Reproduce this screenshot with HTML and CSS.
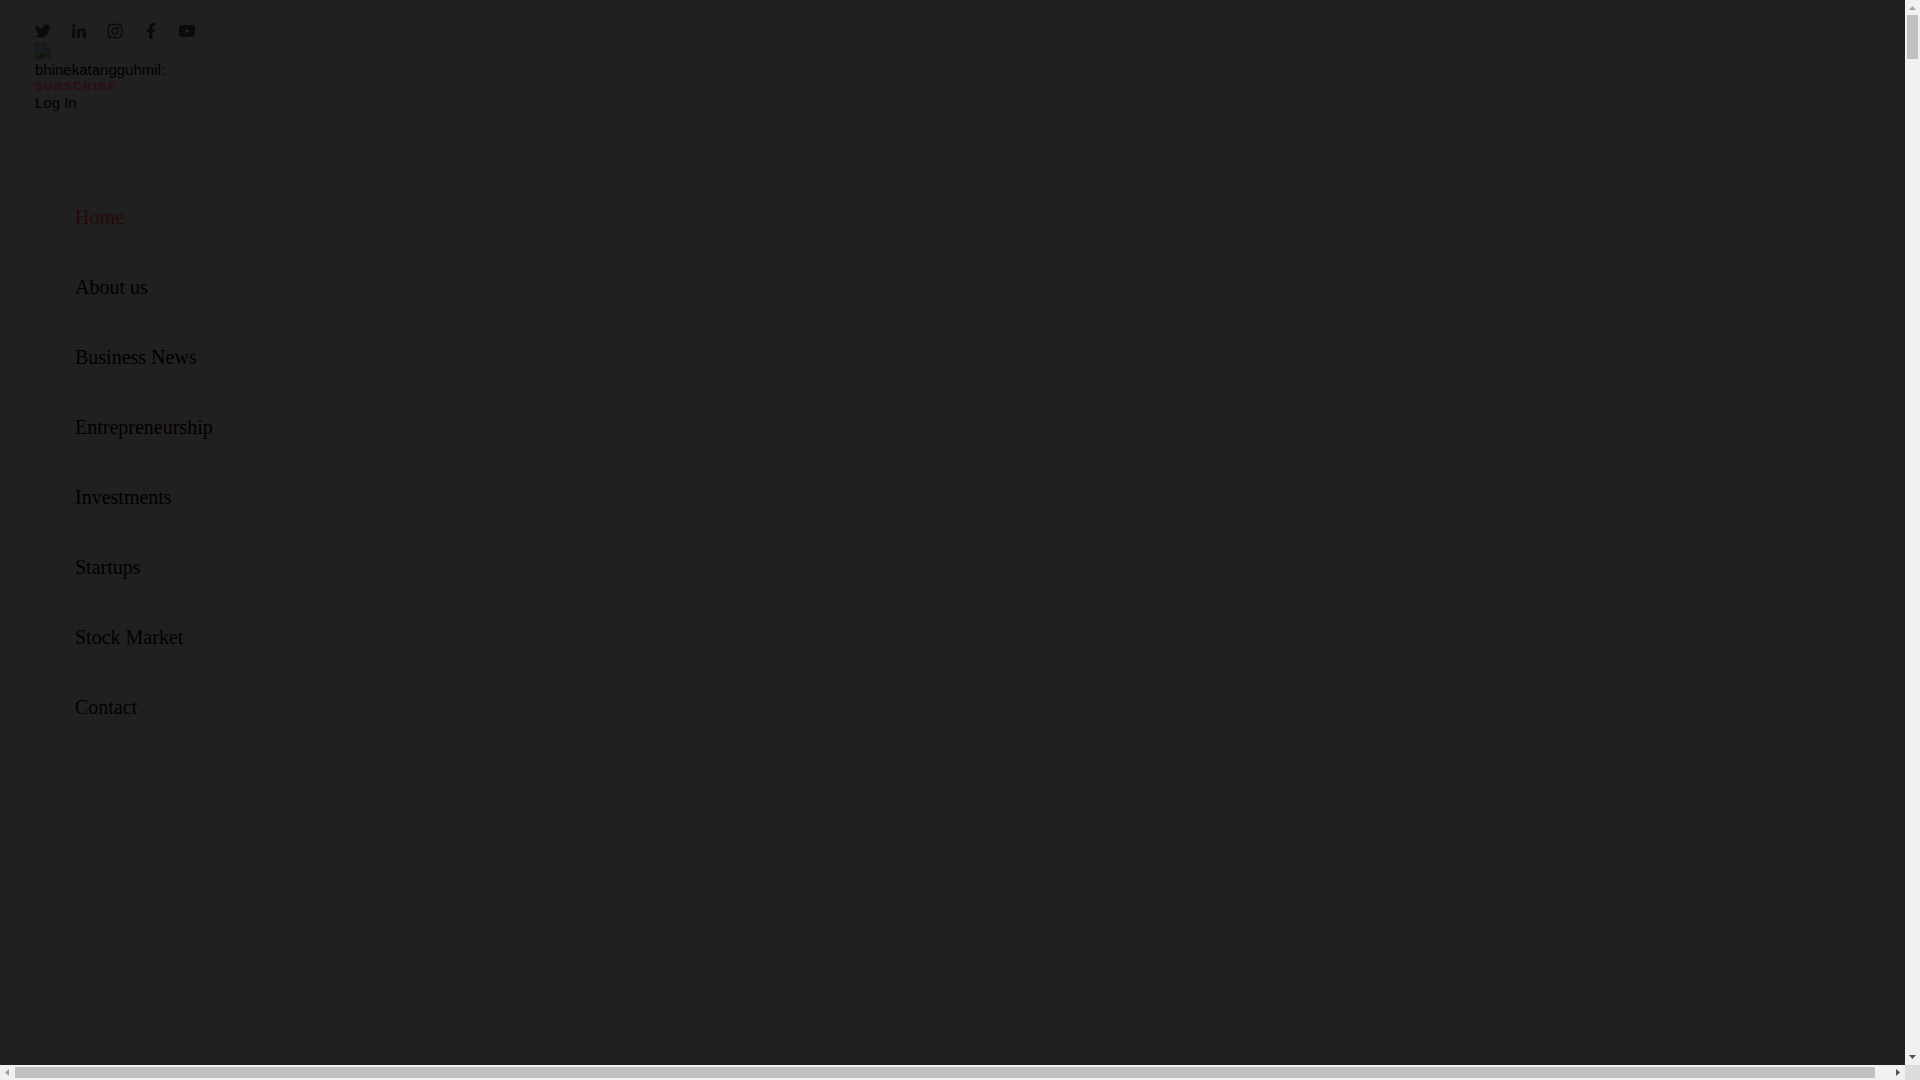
FILE: index.html
```html
<!DOCTYPE html>
<html lang="en">
<head>
    <meta charset="UTF-8">
    <meta name="viewport" content="width=device-width, initial-scale=1.0">
    <title>Home</title>
    <link rel="stylesheet" href="styles.css">
</head>
<body>
    <div class="window">
        <div class="page">
            <header class="header">
                <div class="social">
                    <a href="#" aria-label="Twitter"><svg viewBox="0 0 24 24"><path d="M23.95 4.57a10 10 0 0 1-2.82.77 4.96 4.96 0 0 0 2.16-2.72c-.95.55-2 .95-3.12 1.18a4.92 4.92 0 0 0-8.38 4.48A13.9 13.9 0 0 1 1.64 3.16a4.92 4.92 0 0 0 1.52 6.57 4.9 4.9 0 0 1-2.23-.61v.06a4.92 4.92 0 0 0 3.95 4.83 5 5 0 0 1-2.21.08 4.94 4.94 0 0 0 4.6 3.42A9.87 9.87 0 0 1 0 19.54a14 14 0 0 0 7.55 2.21c9.05 0 14-7.5 14-13.98 0-.21 0-.42-.02-.63a9.94 9.94 0 0 0 2.42-2.57z"/></svg></a>
                    <a href="#" aria-label="LinkedIn"><svg viewBox="0 0 24 24"><path d="M1.9 8.4h4.4v14.100H1.900zM4.100 1.500a2.500 2.500 0 1 1 0 5.100 2.500 2.500 0 0 1 0-5.100zM9 8.400h4.200v1.900c.6-1.100 2-2.300 4.200-2.300 4.400 0 5.200 2.900 5.200 6.700v7.800h-4.400v-6.900c0-1.600 0-3.700-2.300-3.700s-2.600 1.800-2.600 3.600v7H9z"/></svg></a>
                    <a href="#" aria-label="Instagram"><svg viewBox="0 0 24 24"><g fill="none" stroke="currentColor" stroke-width="2"><rect x="2" y="2" width="20" height="20" rx="5"/><circle cx="12" cy="12" r="4.500"/></g><circle cx="17.500" cy="6.500" r="1.300"/></svg></a>
                    <a href="#" aria-label="Facebook"><svg viewBox="0 0 24 24"><path d="M17.800 13.500l.7-4.300h-4.200V6.400c0-1.200.6-2.300 2.400-2.300h1.900V.4S16.900 0 15.200 0c-3.400 0-5.700 2.100-5.700 5.900v3.300H5.700v4.300h3.800V24h4.800V13.500z"/></svg></a>
                    <a href="#" aria-label="YouTube"><svg viewBox="0 0 24 24"><path fill-rule="evenodd" d="M4 3.500h16a4 4 0 0 1 4 4v9a4 4 0 0 1-4 4H4a4 4 0 0 1-4-4v-9a4 4 0 0 1 4-4zM9.600 8v8l6.800-4z"/></svg></a>
                </div>
                <a href="#" class="logo">
                    <svg class="broken" viewBox="0 0 16 16">
                        <path class="sheet" d="M.5.5h10l5 5v4L8 15.500H.5z"/>
                        <path class="hill" d="M2 14c2-4 6-6 10-3l-4 4H2z"/>
                        <path class="fold" d="M10.500.5v5h5M12 15.500h3.500V12z"/>
                    </svg>
                    <span>bhinekatangguhmil:</span>
                </a>
                <a href="#" class="subscribe">SUBSCRIBE</a>
                <a href="#" class="login">Log In</a>
            </header>
            <nav class="menu">
                <ul>
                    <li><a href="#" class="active">Home</a></li>
                    <li><a href="#">About us</a></li>
                    <li><a href="#">Business News</a></li>
                    <li><a href="#">Entrepreneurship</a></li>
                    <li><a href="#">Investments</a></li>
                    <li><a href="#">Startups</a></li>
                    <li><a href="#">Stock Market</a></li>
                    <li><a href="#">Contact</a></li>
                </ul>
            </nav>
        </div>
        <!-- scroll bars -->
        <div class="bar vertical">
            <svg class="off" viewBox="0 0 15 15"><path d="M4 10h7L7.500 6z"/></svg>
            <div class="track"><div class="thumb"></div></div>
            <svg viewBox="0 0 15 15"><path d="M4 5h7L7.500 9z"/></svg>
        </div>
        <div class="bar horizontal">
            <svg class="off" viewBox="0 0 15 15"><path d="M9 4v7L5 7.500z"/></svg>
            <div class="track"><div class="thumb"></div></div>
            <svg viewBox="0 0 15 15"><path d="M6 4v7l4-3.500z"/></svg>
        </div>
        <div class="corner"></div>
    </div>
</body>
</html>
```

FILE: styles.css
```css
*{
    margin: 0;
    padding: 0;
    box-sizing: border-box;
}
body{
    background-color: #202020;
    font-family: "Liberation Sans", Arial, sans-serif;
    font-size: 15px;
    color: #000;
}
a{
    color: inherit;
    text-decoration: none;
}
svg{
    display: block;
    fill: currentColor;
}
.window{
    display: grid;
    grid-template-columns: 1fr 15px;
    grid-template-rows: 1fr 15px;
    height: 100vh;
}
.page{
    overflow: hidden;
}
.header{
    display: flex;
    flex-direction: column;
    align-items: flex-start;
    padding: 23px 35px 0;
}
.social{
    display: flex;
    gap: 20px;
    color: #0a0a0a;
}
.social svg{
    width: 16px;
    height: 16px;
}
.logo{
    margin-top: 4px;
    line-height: 18px;
}
.broken{
    width: 16px;
    height: 16px;
    margin-bottom: 2px;
}
.sheet{
    fill: #1b1c1f;
    stroke: #141414;
}
.hill{
    fill: #0c1c08;
}
.fold{
    fill: #202020;
    stroke: #141414;
}
.subscribe{
    font-size: 11px;
    font-weight: bold;
    line-height: 15px;
    letter-spacing: 2px;
    color: #2c0c10;
}
.login{
    line-height: 18px;
}
/* menu */
.menu{
    padding: 70px 75px 26px;
    border-bottom: 1px solid #1c1c1c;
    font-family: "Liberation Serif", "Times New Roman", serif;
    font-size: 20px;
}
.menu ul{
    list-style: none;
}
.menu a{
    display: block;
    line-height: 70px;
}
.menu .active{
    color: #260a0a;
}
/* scroll bars */
.bar{
    display: flex;
    background-color: #f1f1f1;
    color: #505050;
}
.bar svg{
    flex: none;
    width: 15px;
    height: 15px;
}
.bar .off{
    color: #a3a3a3;
}
.track{
    flex: 1;
}
.thumb{
    background-color: #c1c1c1;
}
.vertical{
    flex-direction: column;
}
.vertical .track{
    padding: 0 2px;
}
.vertical .thumb{
    height: 44px;
}
.horizontal .track{
    padding: 2px 15px 2px 0;
}
.horizontal .thumb{
    height: 11px;
}
.corner{
    background-color: #dcdcdc;
}
```
